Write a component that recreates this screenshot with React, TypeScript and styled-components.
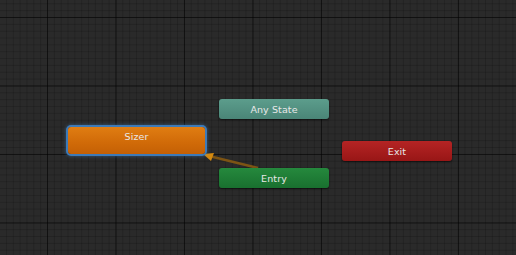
import React from 'react';
import styled, { createGlobalStyle } from 'styled-components';

const GlobalStyle = createGlobalStyle`
  html, body {
    margin: 0;
    padding: 0;
    background: #282828;
    overflow: hidden;
  }
`;

const MAJOR = 68.5;
const MINOR = MAJOR / 10;

const Canvas = styled.div`
  position: relative;
  width: 516px;
  height: 255px;
  overflow: hidden;
  background-color: #2a2a2a;
  background-image:
    linear-gradient(to right, rgba(0, 0, 0, 0.5) 1px, transparent 1px),
    linear-gradient(to bottom, rgba(0, 0, 0, 0.5) 1px, transparent 1px),
    linear-gradient(to right, rgba(0, 0, 0, 0.16) 1px, transparent 1px),
    linear-gradient(to bottom, rgba(0, 0, 0, 0.16) 1px, transparent 1px);
  background-size:
    ${MAJOR}px ${MAJOR}px,
    ${MAJOR}px ${MAJOR}px,
    ${MINOR}px ${MINOR}px,
    ${MINOR}px ${MINOR}px;
  background-position: 47px 17px, 47px 17px, 47px 17px, 47px 17px;
  font-family: 'DejaVu Sans', 'Liberation Sans', sans-serif;
`;

type Kind = 'default' | 'any' | 'entry' | 'exit';

const fills: Record<Kind, string> = {
  default: 'linear-gradient(to bottom, #e07d12 0%, #d06a08 60%, #c46005 100%)',
  any: 'linear-gradient(to bottom, #5c9d8c 0%, #4a8577 100%)',
  entry: 'linear-gradient(to bottom, #25893d 0%, #19702f 100%)',
  exit: 'linear-gradient(to bottom, #b52424 0%, #981616 100%)',
};

// default states are taller, their label sits in the upper part
const Node = styled.div<{ $kind: Kind; $selected?: boolean }>`
  position: absolute;
  display: flex;
  align-items: center;
  justify-content: center;
  box-sizing: border-box;
  padding-bottom: ${(p) => (p.$kind === 'default' ? '8px' : '0')};
  border-radius: 3px;
  background: ${(p) => fills[p.$kind]};
  color: #e8e8e8;
  font-size: 9.5px;
  letter-spacing: 0.1px;
  box-shadow: ${(p) =>
    p.$selected
      ? '0 0 0 2px #3d7ab8, 0 0 3px 3px rgba(70, 140, 210, 0.3)'
      : '0 1px 2px rgba(0, 0, 0, 0.6)'};
`;

const Link = styled.svg`
  position: absolute;
  left: 0;
  top: 0;
  pointer-events: none;
`;

export default function App() {
  const nodes = [
    { id: 'sizer', label: 'Sizer', kind: 'default' as Kind, x: 68, y: 127, w: 137, h: 27, selected: true },
    { id: 'any', label: 'Any State', kind: 'any' as Kind, x: 219, y: 99, w: 110, h: 20 },
    { id: 'entry', label: 'Entry', kind: 'entry' as Kind, x: 219, y: 168, w: 110, h: 20 },
    { id: 'exit', label: 'Exit', kind: 'exit' as Kind, x: 342, y: 141, w: 110, h: 20 },
  ];

  return (
    <>
      <GlobalStyle />
      <Canvas>
        <Link width={516} height={255}>
          <line x1={258} y1={168} x2={209} y2={156} stroke="#7d5414" strokeWidth={2.5} />
          <polygon points="203,154 214,153 211,161" fill="#d48a10" />
        </Link>
        {nodes.map((n) => (
          <Node
            key={n.id}
            $kind={n.kind}
            $selected={n.selected}
            style={{ left: n.x, top: n.y, width: n.w, height: n.h }}
          >
            {n.label}
          </Node>
        ))}
      </Canvas>
    </>
  );
}
